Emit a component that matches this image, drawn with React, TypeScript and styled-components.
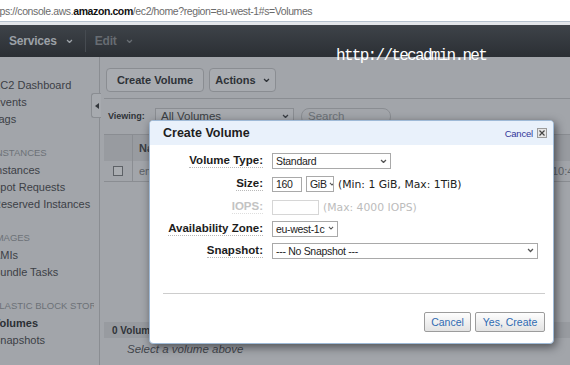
import React from 'react';
import styled, { createGlobalStyle } from 'styled-components';

// ______________________________________________________
//
// @ Colors
const COLOR = {
  dim: '#a2a5aa',
  dimDark: '#989ba0',
  dimLine: '#8a8d92',
  dimText: '#35393e',
  dimMuted: '#6c7177',
  link: '#33379a',
  action: '#2f6bb2',
};

const GlobalStyle = createGlobalStyle`
  html, body {
    margin: 0;
    padding: 0;
  }
  body {
    width: 570px;
    height: 365px;
    overflow: hidden;
    background: ${COLOR.dim};
    font-family: 'Liberation Sans', Arial, sans-serif;
  }
`;

// ______________________________________________________
//
// @ Icons
const Caret: React.FC<{ size?: number }> = ({ size = 7 }) => (
  <svg width={size} height={size * 0.7} viewBox="0 0 7 5">
    <path d="M1 1l2.5 2.6L6 1" fill="none" stroke="currentColor" strokeWidth="1.3" />
  </svg>
);

const CloseGlyph = () => (
  <svg width="6" height="6" viewBox="0 0 6 6">
    <path d="M0.5 0.5l5 5M5.5 0.5l-5 5" stroke="#444" strokeWidth="1.2" />
  </svg>
);

// ______________________________________________________
//
// @ Browser chrome + top nav
const Screen = styled.div`
  position: relative;
  width: 570px;
  height: 365px;
  overflow: hidden;
  display: flex;
  flex-direction: column;
`;

const AddressBar = styled.div`
  flex: none;
  height: 21px;
  background: #fff;
  border-bottom: 1px solid #b5c1ce;
  display: flex;
  align-items: center;
  overflow: hidden;
  white-space: nowrap;
  font-size: 10.5px;
  letter-spacing: -0.4px;
  color: #6b6b6b;

  > span {
    margin-left: -11px;
  }
  b {
    color: #111;
  }
`;

const TopNav = styled.div`
  flex: none;
  height: 32px;
  border-top: 3px solid #e3e6ea;
  background: linear-gradient(#3e4349, #2b2f34);
  display: flex;
  align-items: center;
  padding-left: 9px;
`;

const NavItem = styled.div<{ $muted?: boolean }>`
  display: flex;
  align-items: center;
  gap: 9px;
  font-size: 12px;
  font-weight: 700;
  letter-spacing: -0.2px;
  color: ${p => (p.$muted ? '#676c72' : '#9ca1a7')};
`;

const NavDivider = styled.div`
  width: 1px;
  height: 22px;
  margin: 0 9px 0 12px;
  background: #464b51;
`;

const Watermark = styled.div`
  position: absolute;
  left: 336px;
  top: 46px;
  font-family: 'Liberation Mono', 'Courier New', monospace;
  font-size: 16px;
  letter-spacing: -1.7px;
  line-height: 20px;
  color: #fff;
`;

// ______________________________________________________
//
// @ Sidebar
const Body = styled.div`
  position: relative;
  flex: 1;
  display: flex;
  min-height: 0;
`;

const Sidebar = styled.nav`
  flex: none;
  width: 100px;
  box-sizing: border-box;
  border-right: 1px solid ${COLOR.dimLine};
  overflow: hidden;
`;

const NavList = styled.div`
  width: 101px;
  margin-left: -7px;
  padding-top: 20px;
  overflow: hidden;
  white-space: nowrap;
`;

const NavGroup = styled.div`
  & + & {
    margin-top: 16px;
  }
`;

const NavHeading = styled.div`
  height: 18px;
  line-height: 18px;
  font-size: 9.5px;
  text-transform: uppercase;
  color: ${COLOR.dimMuted};
`;

const NavLink = styled.div<{ $active?: boolean }>`
  height: 17px;
  line-height: 17px;
  font-size: 11px;
  font-weight: ${p => (p.$active ? 700 : 400)};
  color: ${p => (p.$active ? '#2b2f34' : '#3c4046')};
`;

const CollapseTab = styled.div`
  position: absolute;
  left: 91px;
  top: 36px;
  width: 10px;
  height: 25px;
  box-sizing: border-box;
  border: 1px solid ${COLOR.dimLine};
  border-right: none;
  border-radius: 3px 0 0 3px;
  background: #a7aaaf;
  display: flex;
  align-items: center;
  justify-content: center;

  &::before {
    content: '';
    border-style: solid;
    border-width: 3.5px 4px 3.5px 0;
    border-color: transparent #33373c transparent transparent;
  }
`;

// ______________________________________________________
//
// @ Main content (dimmed behind the dialog)
const Main = styled.main`
  flex: 1;
  display: flex;
  flex-direction: column;
  padding-left: 4px;
  min-width: 0;
`;

const Toolbar = styled.div`
  display: flex;
  gap: 5px;
  padding: 11px 0 6px 2px;
  border-bottom: 1px solid ${COLOR.dimLine};
`;

const ToolButton = styled.div<{ $width: number }>`
  width: ${p => p.$width}px;
  height: 24px;
  box-sizing: border-box;
  border: 1px solid ${COLOR.dimLine};
  border-radius: 4px;
  background: #a8abb0;
  display: flex;
  align-items: center;
  justify-content: center;
  gap: 7px;
  font-size: 11px;
  font-weight: 700;
  color: #2e3237;
`;

const FilterRow = styled.div`
  display: flex;
  align-items: center;
  height: 16px;
  margin-top: 9px;
  padding-left: 4px;
`;

const FilterLabel = styled.span`
  width: 47px;
  font-size: 9px;
  font-weight: 700;
  color: #2f3338;
`;

const DimSelect = styled.div`
  width: 139px;
  height: 16px;
  box-sizing: border-box;
  border: 1px solid ${COLOR.dimLine};
  background: #a6a9ae;
  display: flex;
  align-items: center;
  justify-content: space-between;
  padding: 0 4px 0 5px;
  font-size: 11.5px;
  color: #3a3e44;
`;

const DimSearch = styled.div`
  width: 90px;
  height: 17px;
  margin-left: 7px;
  box-sizing: border-box;
  border: 1px solid ${COLOR.dimLine};
  border-radius: 8px;
  padding-left: 6px;
  display: flex;
  align-items: center;
  font-size: 11.5px;
  color: ${COLOR.dimMuted};
`;

const Table = styled.div`
  margin-top: 10px;
  display: grid;
  grid-template-columns: 29px 419px 1fr;
  grid-template-rows: 27px 21px;
  white-space: nowrap;
`;

const HeadCell = styled.div<{ $divider?: boolean }>`
  background: ${COLOR.dimDark};
  border-top: 1px solid ${COLOR.dimLine};
  border-right: ${p => (p.$divider ? `1px solid ${COLOR.dimLine}` : 'none')};
  display: flex;
  align-items: center;
  padding-left: 6px;
  font-size: 11px;
  font-weight: 700;
  color: #3a3e44;
`;

const RowCell = styled.div<{ $divider?: boolean; $center?: boolean; $pad?: number }>`
  border-bottom: 1px solid ${COLOR.dimLine};
  border-right: ${p => (p.$divider ? `1px solid ${COLOR.dimLine}` : 'none')};
  display: flex;
  align-items: center;
  justify-content: ${p => (p.$center ? 'center' : 'flex-start')};
  padding-left: ${p => (p.$center ? 0 : p.$pad ?? 6)}px;
  font-size: 11px;
  color: #5c6167;
`;

const RowCheckbox = styled.div`
  width: 10px;
  height: 10px;
  box-sizing: border-box;
  border: 1px solid #5d6166;
  background: #aaadb1;
`;

const DetailBar = styled.div`
  margin-top: auto;
  height: 16px;
  background: ${COLOR.dimDark};
  padding-left: 8px;
  display: flex;
  align-items: center;
  font-size: 10px;
  font-weight: 700;
  color: #2f3338;
`;

const DetailHint = styled.div`
  height: 27px;
  box-sizing: border-box;
  padding: 4px 0 0 23px;
  line-height: 14px;
  font-size: 11.5px;
  font-style: italic;
  color: #42464c;
`;

// ______________________________________________________
//
// @ Dialog
const Dialog = styled.div`
  position: absolute;
  left: 149px;
  top: 120px;
  width: 405px;
  height: 224px;
  box-sizing: border-box;
  border: 1px solid #9fbad7;
  border-radius: 4px;
  background: #fff;
  box-shadow: 2px 3px 10px rgba(20, 22, 26, 0.6);
  display: flex;
  flex-direction: column;
  overflow: hidden;
`;

const DialogHeader = styled.div`
  height: 24px;
  flex: none;
  background: #e9f1fb;
  display: flex;
  align-items: center;
  padding: 0 6px 0 13px;
`;

const DialogTitle = styled.h2`
  margin: 0;
  flex: 1;
  font-size: 12.5px;
  font-weight: 700;
  color: #1e1e1e;
`;

const HeaderLink = styled.span`
  font-size: 9.5px;
  letter-spacing: -0.2px;
  color: ${COLOR.link};
  margin-right: 4px;
`;

const CloseBox = styled.span`
  width: 10px;
  height: 10px;
  box-sizing: border-box;
  border: 1px solid #9b9b9b;
  background: #e6e6e6;
  display: flex;
  align-items: center;
  justify-content: center;
`;

const FormGrid = styled.div`
  display: grid;
  grid-template-columns: 113px 1fr;
  grid-template-rows: 22px 24px 22px 21px 23px;
  column-gap: 9px;
  padding-top: 5px;
`;

const FieldLabel = styled.span<{ $disabled?: boolean }>`
  justify-self: end;
  align-self: center;
  font-size: 11.5px;
  font-weight: 700;
  line-height: 13px;
  color: ${p => (p.$disabled ? '#c3c3c3' : '#1c1c1c')};
  border-bottom: 1px dotted ${p => (p.$disabled ? '#dedede' : '#b9b9b9')};
`;

const FieldControls = styled.div`
  display: flex;
  align-items: center;
  gap: 4px;
`;

const Select = styled.div<{ $width: number }>`
  width: ${p => p.$width}px;
  height: 16px;
  box-sizing: border-box;
  border: 1px solid #a9a9a9;
  background: #fff;
  display: flex;
  align-items: center;
  justify-content: space-between;
  gap: 2px;
  padding: 0 3px 0 3px;
  font-size: 10.5px;
  letter-spacing: -0.3px;
  color: #222;
  white-space: nowrap;
  overflow: hidden;

  svg {
    flex: none;
    color: #555;
  }
`;

const TextInput = styled.div<{ $width: number; $disabled?: boolean }>`
  width: ${p => p.$width}px;
  height: 15px;
  box-sizing: border-box;
  border: 1px solid ${p => (p.$disabled ? '#d6d6d6' : '#a9a9a9')};
  padding-left: 3px;
  display: flex;
  align-items: center;
  font-size: 10.5px;
  letter-spacing: -0.3px;
  color: #222;
`;

const FieldHint = styled.span<{ $disabled?: boolean }>`
  font-family: 'DejaVu Sans', Verdana, sans-serif;
  font-size: 10.8px;
  color: ${p => (p.$disabled ? '#bcbcbc' : '#222')};
  white-space: nowrap;
`;

const DialogFooter = styled.div`
  margin: auto 8px 0 13px;
  border-top: 1px solid #cdcdcd;
  padding: 18px 0 11px;
  display: flex;
  justify-content: flex-end;
  gap: 4px;
`;

const DialogButton = styled.button<{ $width: number }>`
  width: ${p => p.$width}px;
  height: 20px;
  padding: 0;
  box-sizing: border-box;
  border: 1px solid #9c9c9c;
  border-radius: 2px;
  background: linear-gradient(#fefefe, #e3e3e3);
  font-family: 'Liberation Sans', Arial, sans-serif;
  font-size: 10.5px;
  color: ${COLOR.action};
`;

// ______________________________________________________
//
// @ Data
const NAV = [
  { items: ['EC2 Dashboard', 'Events', 'Tags'] },
  { heading: 'Instances', items: ['Instances', 'Spot Requests', 'Reserved Instances'] },
  { heading: 'Images', items: ['AMIs', 'Bundle Tasks'] },
  { heading: 'Elastic Block Store', items: ['Volumes', 'Snapshots'], active: 'Volumes' },
];

// ______________________________________________________
//
// @ App
const App: React.FC = () => (
  <>
    <GlobalStyle />
    <Screen>
      <AddressBar>
        <span>
          https://console.aws.<b>amazon.com</b>/ec2/home?region=eu-west-1#s=Volumes
        </span>
      </AddressBar>
      <TopNav>
        <NavItem>
          Services <Caret />
        </NavItem>
        <NavDivider />
        <NavItem $muted>
          Edit <Caret />
        </NavItem>
      </TopNav>

      <Body>
        <Sidebar>
          <NavList>
            {NAV.map((group, i) => (
              <NavGroup key={i}>
                {group.heading && <NavHeading>{group.heading}</NavHeading>}
                {group.items.map(item => (
                  <NavLink key={item} $active={item === group.active}>
                    {item}
                  </NavLink>
                ))}
              </NavGroup>
            ))}
          </NavList>
        </Sidebar>
        <CollapseTab />

        <Main>
          <Toolbar>
            <ToolButton $width={98}>Create Volume</ToolButton>
            <ToolButton $width={67}>
              Actions <Caret />
            </ToolButton>
          </Toolbar>
          <FilterRow>
            <FilterLabel>Viewing:</FilterLabel>
            <DimSelect>
              All Volumes <Caret />
            </DimSelect>
            <DimSearch>Search</DimSearch>
          </FilterRow>
          <Table>
            <HeadCell $divider />
            <HeadCell>Name</HeadCell>
            <HeadCell />
            <RowCell $divider $center>
              <RowCheckbox />
            </RowCell>
            <RowCell>empty</RowCell>
            <RowCell $pad={0}>10:46:12</RowCell>
          </Table>
          <DetailBar>0 Volumes selected</DetailBar>
          <DetailHint>Select a volume above</DetailHint>
        </Main>
      </Body>

      <Watermark>http://tecadmin.net</Watermark>

      <Dialog>
        <DialogHeader>
          <DialogTitle>Create Volume</DialogTitle>
          <HeaderLink>Cancel</HeaderLink>
          <CloseBox>
            <CloseGlyph />
          </CloseBox>
        </DialogHeader>
        <FormGrid>
          <FieldLabel>Volume Type:</FieldLabel>
          <FieldControls>
            <Select $width={119}>
              Standard <Caret />
            </Select>
          </FieldControls>

          <FieldLabel>Size:</FieldLabel>
          <FieldControls>
            <TextInput $width={30}>160</TextInput>
            <Select $width={28}>
              GiB <Caret size={6} />
            </Select>
            <FieldHint>(Min: 1 GiB, Max: 1TiB)</FieldHint>
          </FieldControls>

          <FieldLabel $disabled>IOPS:</FieldLabel>
          <FieldControls>
            <TextInput $width={47} $disabled />
            <FieldHint $disabled>(Max: 4000 IOPS)</FieldHint>
          </FieldControls>

          <FieldLabel>Availability Zone:</FieldLabel>
          <FieldControls>
            <Select $width={66}>
              eu-west-1c <Caret size={6} />
            </Select>
          </FieldControls>

          <FieldLabel>Snapshot:</FieldLabel>
          <FieldControls>
            <Select $width={266}>
              --- No Snapshot --- <Caret />
            </Select>
          </FieldControls>
        </FormGrid>
        <DialogFooter>
          <DialogButton $width={47}>Cancel</DialogButton>
          <DialogButton $width={70}>Yes, Create</DialogButton>
        </DialogFooter>
      </Dialog>
    </Screen>
  </>
);

export default App;
